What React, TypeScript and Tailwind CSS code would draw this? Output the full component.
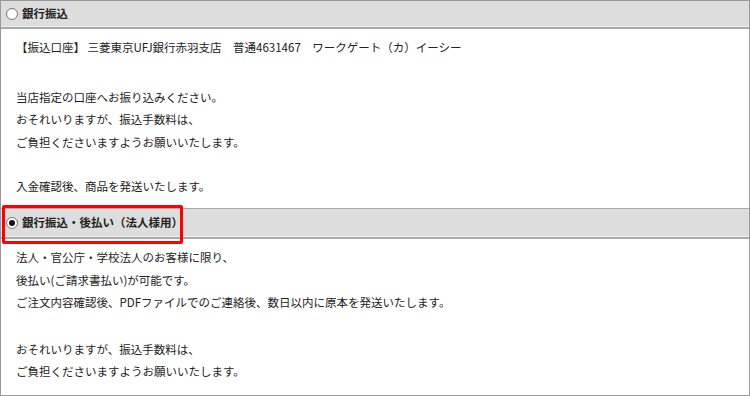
const Radio = ({ checked }: { checked?: boolean }) => {
  return (
    <span className="flex h-[12px] w-[12px] items-center justify-center rounded-full border border-[#767676] bg-white">
      {checked && <span className="h-[6px] w-[6px] rounded-full bg-[#111]"></span>}
    </span>
  );
};

const Header = ({
  label,
  checked,
  className = "",
}: {
  label: string;
  checked?: boolean;
  className?: string;
}) => {
  return (
    <div
      className={`relative flex items-center gap-[4px] bg-[#dddddd] pl-[5px] border-b-2 border-[#a9a9a9] shadow-[inset_0_-1px_0_#f0f0f0] ${className}`}
    >
      <Radio checked={checked} />
      <span className="text-[11.5px] font-bold text-[#222]">{label}</span>
    </div>
  );
};

export default function App() {
  return (
    <div
      className="w-[750px] h-[396px] border border-[#999] bg-white text-[#222] overflow-hidden"
      style={{ fontFamily: '"Noto Sans CJK JP", "Noto Sans", sans-serif' }}
    >
      <Header label="銀行振込" className="h-[28px]" />
      <div className="px-[15px] pt-[7px] pb-[11px] text-[11.5px] leading-[22.5px]">
        <p>【振込口座】 三菱東京UFJ銀行赤羽支店　普通4631467　ワークゲート（カ）イーシー</p>
        <p className="mt-[27px]">
          当店指定の口座へお振り込みください。
          <br />
          おそれいりますが、振込手数料は、
          <br />
          ご負担くださいますようお願いいたします。
        </p>
        <p className="mt-[21.5px]">入金確認後、商品を発送いたします。</p>
      </div>
      <div className="relative">
        <Header
          label="銀行振込・後払い（法人様用）"
          checked
          className="h-[31px] border-t border-t-[#a9a9a9]"
        />
        <div className="absolute left-[1px] top-[-3px] h-[39px] w-[181px] rounded-[2px] border-[3px] border-[#ff0000]"></div>
      </div>
      <div className="px-[15px] pt-[7px] text-[11.5px] leading-[22.5px]">
        <p>
          法人・官公庁・学校法人のお客様に限り、
          <br />
          後払い(ご請求書払い)が可能です。
          <br />
          ご注文内容確認後、PDFファイルでのご連絡後、数日以内に原本を発送いたします。
        </p>
        <p className="mt-[24px]">
          おそれいりますが、振込手数料は、
          <br />
          ご負担くださいますようお願いいたします。
        </p>
      </div>
    </div>
  );
}
